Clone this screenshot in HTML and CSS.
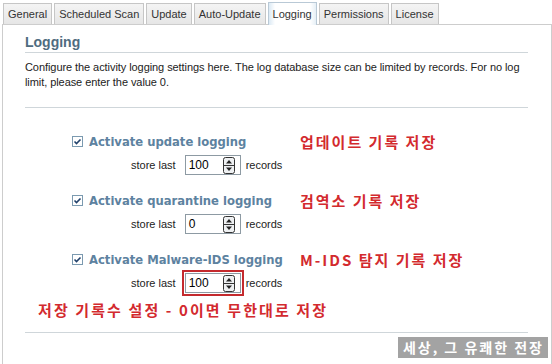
FILE: index.html
```html
<!DOCTYPE html>
<html>
<head>
<meta charset="utf-8">
<link rel="stylesheet" href="styles.css">
</head>
<body>
<div class="tabs">
  <div class="tab">General</div>
  <div class="tab">Scheduled Scan</div>
  <div class="tab">Update</div>
  <div class="tab">Auto-Update</div>
  <div class="tab active">Logging</div>
  <div class="tab">Permissions</div>
  <div class="tab">License</div>
</div>
<div class="panel">
  <h1 class="title">Logging</h1>
  <p class="desc">Configure the activity logging settings here. The log database size can be limited by records. For no log limit, please enter the value 0.</p>
  <div class="options">
    <div class="option">
      <div class="label-row">
        <span class="check"><svg width="11" height="11" viewBox="0 0 11 11"><rect x="0.5" y="0.5" width="10" height="10" fill="#fff" stroke="#7b9ab0"/><path d="M2.5 5.5 L4.5 7.5 L8.5 3.5" fill="none" stroke="#21416b" stroke-width="1.6"/></svg></span>
        <span class="label">Activate update logging</span>
        <span class="note">업데이트 기록 저장</span>
      </div>
      <div class="store-row">
        <span class="store">store last</span>
        <span class="field"><span class="val">100</span><span class="spin"><svg width="12" height="17" viewBox="0 0 12 17"><rect x="0.5" y="0.5" width="11" height="16" rx="2" fill="#eef0f2" stroke="#333"/><line x1="1" y1="8.5" x2="11" y2="8.5" stroke="#333"/><path d="M3 6.5 L6 3 L9 6.5 Z" fill="#222"/><path d="M3 10.5 L6 14 L9 10.5 Z" fill="#222"/></svg></span></span>
        <span class="store">records</span>
      </div>
    </div>
    <div class="option">
      <div class="label-row">
        <span class="check"><svg width="11" height="11" viewBox="0 0 11 11"><rect x="0.5" y="0.5" width="10" height="10" fill="#fff" stroke="#7b9ab0"/><path d="M2.5 5.5 L4.5 7.5 L8.5 3.5" fill="none" stroke="#21416b" stroke-width="1.6"/></svg></span>
        <span class="label">Activate quarantine logging</span>
        <span class="note">검역소 기록 저장</span>
      </div>
      <div class="store-row">
        <span class="store">store last</span>
        <span class="field"><span class="val">0</span><span class="spin"><svg width="12" height="17" viewBox="0 0 12 17"><rect x="0.5" y="0.5" width="11" height="16" rx="2" fill="#eef0f2" stroke="#333"/><line x1="1" y1="8.5" x2="11" y2="8.5" stroke="#333"/><path d="M3 6.5 L6 3 L9 6.5 Z" fill="#222"/><path d="M3 10.5 L6 14 L9 10.5 Z" fill="#222"/></svg></span></span>
        <span class="store">records</span>
      </div>
    </div>
    <div class="option">
      <div class="label-row">
        <span class="check"><svg width="11" height="11" viewBox="0 0 11 11"><rect x="0.5" y="0.5" width="10" height="10" fill="#fff" stroke="#7b9ab0"/><path d="M2.5 5.5 L4.5 7.5 L8.5 3.5" fill="none" stroke="#21416b" stroke-width="1.6"/></svg></span>
        <span class="label">Activate Malware-IDS logging</span>
        <span class="note">M-IDS 탐지 기록 저장</span>
      </div>
      <div class="store-row">
        <span class="store">store last</span>
        <span class="field marked"><span class="val">100</span><span class="spin"><svg width="12" height="17" viewBox="0 0 12 17"><rect x="0.5" y="0.5" width="11" height="16" rx="2" fill="#eef0f2" stroke="#333"/><line x1="1" y1="8.5" x2="11" y2="8.5" stroke="#333"/><path d="M3 6.5 L6 3 L9 6.5 Z" fill="#222"/><path d="M3 10.5 L6 14 L9 10.5 Z" fill="#222"/></svg></span></span>
        <span class="store">records</span>
      </div>
    </div>
  </div>
  <div class="bottom-note">저장 기록수 설정 - 0이면 무한대로 저장</div>
  <div class="footer">
    <span class="watermark">세상, 그 유쾌한 전장</span>
  </div>
</div>
</body>
</html>
```
FILE: styles.css
```css
html, body {
  margin: 0;
  padding: 0;
  background: #fff;
  font-family: "Liberation Sans", Arial, sans-serif;
  font-size: 11px;
  color: #222;
  width: 552px;
  height: 364px;
  overflow: hidden;
}

.tabs {
  display: flex;
  align-items: flex-end;
  gap: 2px;
  padding-left: 3px;
  height: 24px;
}

.tab {
  height: 21px;
  line-height: 21px;
  padding: 0 4px;
  border: 1px solid #c6c6c6;
  border-bottom: none;
  background: linear-gradient(#f4f4f4, #e6e6e6);
  color: #333;
  font-size: 11px;
  box-sizing: border-box;
}

.tab.active {
  height: 23px;
  line-height: 23px;
  background: linear-gradient(90deg, #dbe9f4 0, #ffffff 6px, #ffffff calc(100% - 6px), #e6eff6 100%);
  border-color: #b9c9d6;
  margin-bottom: -1px;
  position: relative;
}

.panel {
  margin-left: 2px;
  border: 1px solid #cdcdcd;
  border-bottom: none;
  padding: 7px 23px 0 22px;
  height: 340px;
  box-sizing: border-box;
}

.title {
  margin: 0;
  font-family: "Liberation Sans", Arial, sans-serif;
  font-size: 14px;
  font-weight: bold;
  color: #4f6c80;
  line-height: 20px;
  border-bottom: 1px solid #cfd6da;
}

.desc {
  margin: 7px 0 0;
  line-height: 15px;
  font-size: 11px;
  letter-spacing: -0.07px;
  color: #222;
  padding-bottom: 17px;
  border-bottom: 1px solid #cfd6da;
}

.options {
  padding-top: 23px;
  display: flex;
  flex-direction: column;
  gap: 14px;
}

.label-row {
  display: grid;
  grid-template-columns: 17px 211px auto;
  align-items: center;
  padding-left: 47px;
  height: 20px;
}

.check {
  display: flex;
  align-items: center;
}

.label {
  font-family: "DejaVu Sans", Verdana, sans-serif;
  font-size: 11.6px;
  font-weight: bold;
  color: #5d82a0;
}

.note {
  font-family: "Noto Sans CJK KR", sans-serif;
  font-size: 15px;
  font-weight: bold;
  color: #d32a2e;
  letter-spacing: 2px;
}

.store-row {
  display: flex;
  align-items: center;
  padding-left: 106px;
  margin-top: 3px;
  height: 22px;
}

.store {
  font-size: 11px;
  color: #222;
}

.field {
  display: flex;
  align-items: center;
  justify-content: space-between;
  width: 56px;
  height: 20px;
  box-sizing: border-box;
  border: 1px solid #8d9aa3;
  margin: 0 5px 0 9px;
  padding: 0 5px 0 3px;
  background: #fff;
}

.field.marked {
  outline: 2px solid #c42a2e;
  outline-offset: 1px;
}

.val {
  font-size: 12px;
  color: #000;
}

.spin {
  display: flex;
}

.bottom-note {
  margin-top: 6px;
  padding-left: 13px;
  font-family: "Noto Sans CJK KR", sans-serif;
  font-size: 15px;
  font-weight: bold;
  color: #d32a2e;
  letter-spacing: 2.1px;
  line-height: 20px;
}

.footer {
  margin-top: 12px;
  border-top: 1px solid #cfd6da;
  display: flex;
  justify-content: flex-end;
  padding-top: 4px;
}

.watermark {
  background: #a3a3a3;
  color: #fff;
  font-family: "Noto Sans CJK KR", sans-serif;
  font-weight: bold;
  font-size: 14px;
  letter-spacing: 2px;
  padding: 0 4px 0 5px;
  line-height: 21px;
  margin-right: -20px;
}
```
